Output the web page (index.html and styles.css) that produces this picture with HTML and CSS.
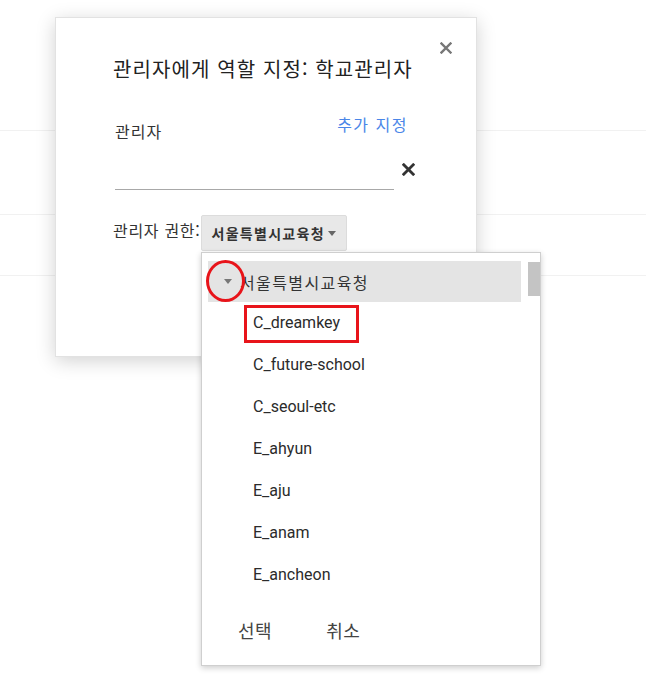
FILE: index.html
```html
<!DOCTYPE html>
<html lang="ko">
<head>
<meta charset="utf-8">
<title>관리자에게 역할 지정</title>
<link rel="stylesheet" href="styles.css">
</head>
<body>
<div class="bg">
  <div class="bg-row r1"></div>
  <div class="bg-row r2"></div>
  <div class="bg-row r3"></div>
</div>

<div class="dialog">
  <button class="close" aria-label="닫기">
    <svg width="12" height="12" viewBox="0 0 12 12"><path d="M1.5 1.5L10.5 10.5M10.5 1.5L1.5 10.5" stroke="#777" stroke-width="2.4" stroke-linecap="square"/></svg>
  </button>
  <h1 class="title">관리자에게 역할 지정: 학교관리자</h1>
  <div class="admin-row">
    <span class="label">관리자</span>
    <a class="add-link">추가 지정</a>
  </div>
  <div class="input-row">
    <div class="input"></div>
    <span class="clear">
      <svg width="13" height="13" viewBox="0 0 13 13"><path d="M1.8 1.8L11.2 11.2M11.2 1.8L1.8 11.2" stroke="#333" stroke-width="2.8" stroke-linecap="square"/></svg>
    </span>
  </div>
  <div class="perm-row">
    <span class="perm-label">관리자 권한:</span>
    <button class="select">서울특별시교육청<span class="caret"></span></button>
  </div>
</div>

<div class="panel">
  <div class="tree-head">
    <span class="caret small"></span>
    <span class="root">서울특별시교육청</span>
  </div>
  <div class="scrollthumb"></div>
  <ul class="items">
    <li>C_dreamkey</li>
    <li>C_future-school</li>
    <li>C_seoul-etc</li>
    <li>E_ahyun</li>
    <li>E_aju</li>
    <li>E_anam</li>
    <li>E_ancheon</li>
  </ul>
  <div class="actions">
    <button class="act">선택</button>
    <button class="act">취소</button>
  </div>
  <div class="mark-circle"></div>
  <div class="mark-rect"></div>
</div>
</body>
</html>
```

FILE: styles.css
```css
* { box-sizing: border-box; }
html, body { margin: 0; padding: 0; background: #fff; }
body {
  width: 646px;
  height: 700px;
  overflow: hidden;
  position: relative;
  font-family: "Noto Sans CJK KR", Roboto, "Noto Sans", sans-serif;
  color: #222;
}
button { font: inherit; border: 0; background: none; padding: 0; cursor: pointer; }

.bg-row { border-bottom: 1px solid #f1f1f1; }
.r1 { height: 131px; }
.r2 { height: 84px; }
.r3 { height: 61px; }

.dialog {
  position: absolute;
  left: 55px;
  top: 17px;
  width: 422px;
  height: 340px;
  background: #fff;
  border: 1px solid #e2e2e2;
  box-shadow: 0 4px 18px rgba(0,0,0,0.18);
  padding: 0 0 0 57px;
}
.close {
  position: absolute;
  left: 384px;
  top: 24px;
  width: 12px;
  height: 12px;
  display: block;
  line-height: 0;
}
.title {
  margin: 37px 0 0 0;
  font-size: 20px;
  font-weight: 400;
  line-height: 28px;
  color: #222;
  letter-spacing: 1.1px;
}
.admin-row {
  margin-top: 29px;
  height: 36px;
  width: 293px;
  display: flex;
  justify-content: space-between;
  align-items: flex-start;
}
.label {
  padding-top: 7px;
  padding-left: 2px;
  font-size: 16px;
  line-height: 24px;
  color: #333;
  letter-spacing: 1px;
}
.add-link {
  font-size: 16px;
  line-height: 24px;
  color: #4a86e8;
  letter-spacing: 1.5px;
  margin-right: -2px;
}
.input-row {
  margin-top: 3px;
  display: flex;
  align-items: flex-start;
  height: 39px;
}
.input {
  margin-left: 2px;
  width: 279px;
  height: 39px;
  border-bottom: 1px solid #a8a8a8;
}
.clear {
  margin-left: 8px;
  margin-top: 12px;
  width: 13px;
  height: 13px;
  line-height: 0;
}
.perm-row {
  margin-top: 25px;
  display: flex;
  align-items: flex-start;
}
.perm-label {
  font-size: 16px;
  line-height: 24px;
  padding-top: 3px;
  color: #333;
  letter-spacing: 0.7px;
}
.select {
  margin-left: 1px;
  width: 146px;
  height: 36px;
  background: #e8e8e8;
  border: 1px solid #dcdcdc;
  border-radius: 2px;
  display: flex;
  align-items: center;
  padding-left: 9px;
  font-size: 14px;
  font-weight: 700;
  color: #333;
  letter-spacing: 1.3px;
}
.caret {
  display: inline-block;
  width: 0; height: 0;
  border-left: 4px solid transparent;
  border-right: 4px solid transparent;
  border-top: 5px solid #666;
  margin-left: 3px;
}

.panel {
  position: absolute;
  left: 201px;
  top: 252px;
  width: 340px;
  height: 414px;
  background: #fff;
  border: 1px solid #cfcfcf;
  box-shadow: 0 2px 6px rgba(0,0,0,0.2);
  padding: 8px 0 0 6px;
}
.tree-head {
  width: 313px;
  height: 41px;
  background: #e4e4e4;
  display: flex;
  align-items: center;
  padding-left: 16px;
}
.caret.small {
  margin-left: 0;
  border-left-width: 4px;
  border-right-width: 4px;
  border-top: 5px solid #777;
}
.root {
  margin-left: 8px;
  font-size: 16px;
  color: #333;
  letter-spacing: 1.4px;
}
.scrollthumb {
  position: absolute;
  left: 326px;
  top: 9px;
  width: 12px;
  height: 34px;
  background: #c4c4c4;
}
.items {
  list-style: none;
  margin: 0;
  padding: 0 0 0 45px;
}
.items li {
  height: 42px;
  line-height: 42px;
  font-family: Roboto, "Noto Sans", sans-serif;
  font-size: 16px;
  color: #2b2b2b;
}
.actions {
  margin-top: 20px;
  display: flex;
  padding-left: 30px;
  gap: 54px;
}
.act {
  font-size: 18px;
  line-height: 28px;
  color: #444;
  letter-spacing: 0.5px;
}
.mark-circle {
  position: absolute;
  left: 4px;
  top: 7px;
  width: 39px;
  height: 42px;
  border: 3.5px solid #e8141a;
  border-radius: 50%;
}
.mark-rect {
  position: absolute;
  left: 42px;
  top: 52px;
  width: 115px;
  height: 38px;
  border: 3.5px solid #e8141a;
}
```
